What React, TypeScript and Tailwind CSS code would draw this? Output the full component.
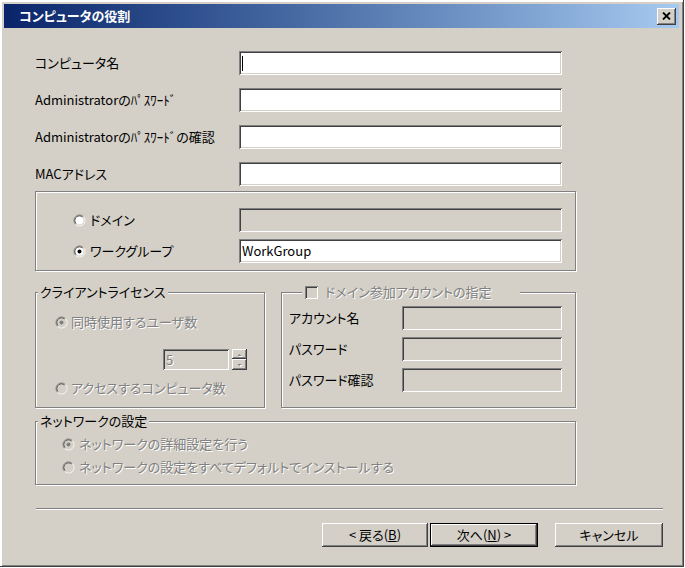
import React from 'react';

const sunken =
  'shadow-[inset_1px_1px_0_#808080,inset_-1px_-1px_0_#ffffff,inset_2px_2px_0_#404040,inset_-2px_-2px_0_#d4d0c8]';
const raised =
  'shadow-[inset_-1px_-1px_0_#404040,inset_1px_1px_0_#ffffff,inset_-2px_-2px_0_#808080,inset_2px_2px_0_#d4d0c8]';
const etched = 'border border-[#808080] shadow-[inset_1px_1px_0_#ffffff,1px_1px_0_#ffffff]';
const disabledText = 'text-[#808080] [text-shadow:1px_1px_0_#ffffff]';

function Field({
  w,
  h = 'h-[24px]',
  disabled,
  children,
}: {
  w: string;
  h?: string;
  disabled?: boolean;
  children?: React.ReactNode;
}) {
  return (
    <div
      className={`${w} ${h} ${disabled ? 'bg-[#d4d0c8]' : 'bg-white'} ${sunken} flex items-center pl-[3px] shrink-0`}
    >
      {children}
    </div>
  );
}

function Radio({ checked, disabled }: { checked?: boolean; disabled?: boolean }) {
  return (
    <svg width="13" height="13" viewBox="-0.5 -0.5 13 13" className="shrink-0">
      <path d="M2.1 9.9 A5.5 5.5 0 0 1 9.9 2.1" fill="none" stroke="#808080" />
      <path d="M9.9 2.1 A5.5 5.5 0 0 1 2.1 9.9" fill="none" stroke="#ffffff" />
      <path d="M2.8 9.2 A4.5 4.5 0 0 1 9.2 2.8" fill="none" stroke="#404040" />
      <path d="M9.2 2.8 A4.5 4.5 0 0 1 2.8 9.2" fill="none" stroke="#d4d0c8" />
      <circle cx="6" cy="6" r="4" fill={disabled ? '#d4d0c8' : '#ffffff'} />
      {checked && <circle cx="6" cy="6" r="2" fill={disabled ? '#808080' : '#000000'} />}
    </svg>
  );
}

function GroupTitle({ children, ml }: { children: React.ReactNode; ml: string }) {
  return (
    <div className={`flex ${ml}`}>
      <span className="-mt-[9px] px-[2px] bg-[#d4d0c8] h-[16px] flex items-center">{children}</span>
    </div>
  );
}

function Arrow({ up }: { up?: boolean }) {
  return (
    <svg width="7" height="5" viewBox="0 0 7 5">
      {up ? (
        <>
          <path d="M1.5 4 L3.5 2 L5.5 4 Z" fill="#ffffff" transform="translate(1 1)" />
          <path d="M1.5 4 L3.5 2 L5.5 4 Z" fill="#808080" />
        </>
      ) : (
        <>
          <path d="M1.5 2 L3.5 4 L5.5 2 Z" fill="#ffffff" transform="translate(1 1)" />
          <path d="M1.5 2 L3.5 4 L5.5 2 Z" fill="#808080" />
        </>
      )}
    </svg>
  );
}

export default function App() {
  const rows = [
    'コンピュータ名',
    'Administratorのﾊﾟｽﾜｰﾄﾞ',
    'Administratorのﾊﾟｽﾜｰﾄﾞの確認',
    'MACアドレス',
  ];
  return (
    <div className="w-[685px] h-[568px] bg-white font-['Noto_Sans_CJK_JP','Noto_Sans',sans-serif] [font-feature-settings:'palt'] text-[13px] leading-[16px] text-black">
      <div
        className={`w-[684px] h-[567px] bg-[#d4d0c8] shadow-[inset_-1px_-1px_0_#404040,inset_2px_2px_0_#ffffff,inset_-2px_-2px_0_#808080] pt-[4px] pl-[4px] pr-[5px] flex flex-col`}
      >
        {/* title bar */}
        <div className="h-[24px] shrink-0 bg-linear-to-r from-[#0a246a] to-[#a6caf0] flex items-center justify-between pl-[15px] pr-[3px]">
          <span className="text-white font-bold text-[13px] leading-[16px]">コンピュータの役割</span>
          <div className={`w-[19px] h-[17px] bg-[#d4d0c8] ${raised} flex items-center justify-center`}>
            <svg width="9" height="8" viewBox="0 0 9 8">
              <path d="M1 0.5 L8 7.5 M8 0.5 L1 7.5" stroke="#000" strokeWidth="1.8" />
            </svg>
          </div>
        </div>

        {/* body */}
        <div className="flex-1 flex flex-col pl-[31px] pt-[23px]">
          <div className="flex flex-col gap-[13px]">
            {rows.map((label, i) => (
              <div key={label} className="flex items-center h-[24px]">
                <div className="w-[204px] whitespace-nowrap">{label}</div>
                <Field w="w-[323px]">
                  {i === 0 && <div className="w-[1px] h-[15px] bg-black" />}
                </Field>
              </div>
            ))}
          </div>

          {/* domain / workgroup */}
          <div className={`mt-[5px] w-[541px] h-[80px] ${etched} flex flex-col pt-[16px] pl-[37px] gap-[7px]`}>
            <div className="flex items-center">
              <div className="w-[166px] flex items-center gap-[4px]">
                <Radio />
                <span>ドメイン</span>
              </div>
              <Field w="w-[323px]" disabled />
            </div>
            <div className="flex items-center">
              <div className="w-[166px] flex items-center gap-[4px]">
                <Radio checked />
                <span>ワークグループ</span>
              </div>
              <Field w="w-[323px]">
                <span className="leading-[16px]">WorkGroup</span>
              </Field>
            </div>
          </div>

          {/* two group boxes */}
          <div className="mt-[21px] flex gap-[16px]">
            <div className={`w-[230px] h-[116px] ${etched} flex flex-col`}>
              <GroupTitle ml="ml-[2px]">クライアントライセンス</GroupTitle>
              <div className={`mt-[14px] pl-[19px] flex items-center gap-[3px] h-[16px] ${disabledText}`}>
                <Radio checked disabled />
                <span>同時使用するユーザ数</span>
              </div>
              <div className="mt-[19px] ml-[127px] flex items-center gap-[3px]">
                <Field w="w-[66px]" h="h-[21px]" disabled>
                  <span className={`${disabledText} leading-[16px]`}>5</span>
                </Field>
                <div className="flex flex-col">
                  <div className={`w-[15px] h-[10px] bg-[#d4d0c8] ${raised} flex items-center justify-center`}>
                    <Arrow up />
                  </div>
                  <div className={`w-[15px] h-[11px] bg-[#d4d0c8] ${raised} flex items-center justify-center`}>
                    <Arrow />
                  </div>
                </div>
              </div>
              <div className={`mt-[10px] pl-[19px] flex items-center gap-[3px] h-[16px] ${disabledText}`}>
                <Radio disabled />
                <span>アクセスするコンピュータ数</span>
              </div>
            </div>

            <div className={`w-[295px] h-[116px] ${etched} flex flex-col`}>
              <div className="flex ml-[20px]">
                <span className="-mt-[9px] pl-[3px] pr-[28px] bg-[#d4d0c8] h-[16px] flex items-center gap-[7px]">
                  <span className={`w-[13px] h-[13px] bg-[#d4d0c8] ${sunken}`} />
                  <span className={disabledText}>ドメイン参加アカウントの指定</span>
                </span>
              </div>
              <div className="mt-[6px] pl-[7px] flex flex-col gap-[7px]">
                {['アカウント名', 'パスワード', 'パスワード確認'].map((l) => (
                  <div key={l} className="flex items-center">
                    <div className="w-[113px]">{l}</div>
                    <Field w="w-[160px]" disabled />
                  </div>
                ))}
              </div>
            </div>
          </div>

          {/* network */}
          <div className={`mt-[13px] w-[541px] h-[64px] ${etched} flex flex-col`}>
            <GroupTitle ml="ml-[2px]">ネットワークの設定</GroupTitle>
            <div className={`mt-[7px] pl-[26px] flex flex-col gap-[7px] ${disabledText}`}>
              <div className="flex items-center gap-[4px] h-[16px]">
                <Radio checked disabled />
                <span>ネットワークの詳細設定を行う</span>
              </div>
              <div className="flex items-center gap-[4px] h-[16px]">
                <Radio disabled />
                <span>ネットワークの設定をすべてデフォルトでインストールする</span>
              </div>
            </div>
          </div>

          {/* separator */}
          <div className="mt-[23px] ml-[1px] w-[627px] h-[2px] border-t border-t-[#808080] border-b border-b-white" />

          {/* buttons */}
          <div className="mt-[13px] w-[628px] flex justify-end">
            <button className={`w-[106px] h-[24px] bg-[#d4d0c8] ${raised} flex items-center justify-center`}>
              &lt; 戻る(<span className="underline">B</span>)
            </button>
            <button
              className={`ml-[2px] w-[108px] h-[24px] bg-[#d4d0c8] border border-black ${raised} flex items-center justify-center`}
            >
              次へ(<span className="underline">N</span>) &gt;
            </button>
            <button className={`ml-[17px] w-[108px] h-[24px] bg-[#d4d0c8] ${raised} flex items-center justify-center`}>
              キャンセル
            </button>
          </div>
        </div>
      </div>
    </div>
  );
}
